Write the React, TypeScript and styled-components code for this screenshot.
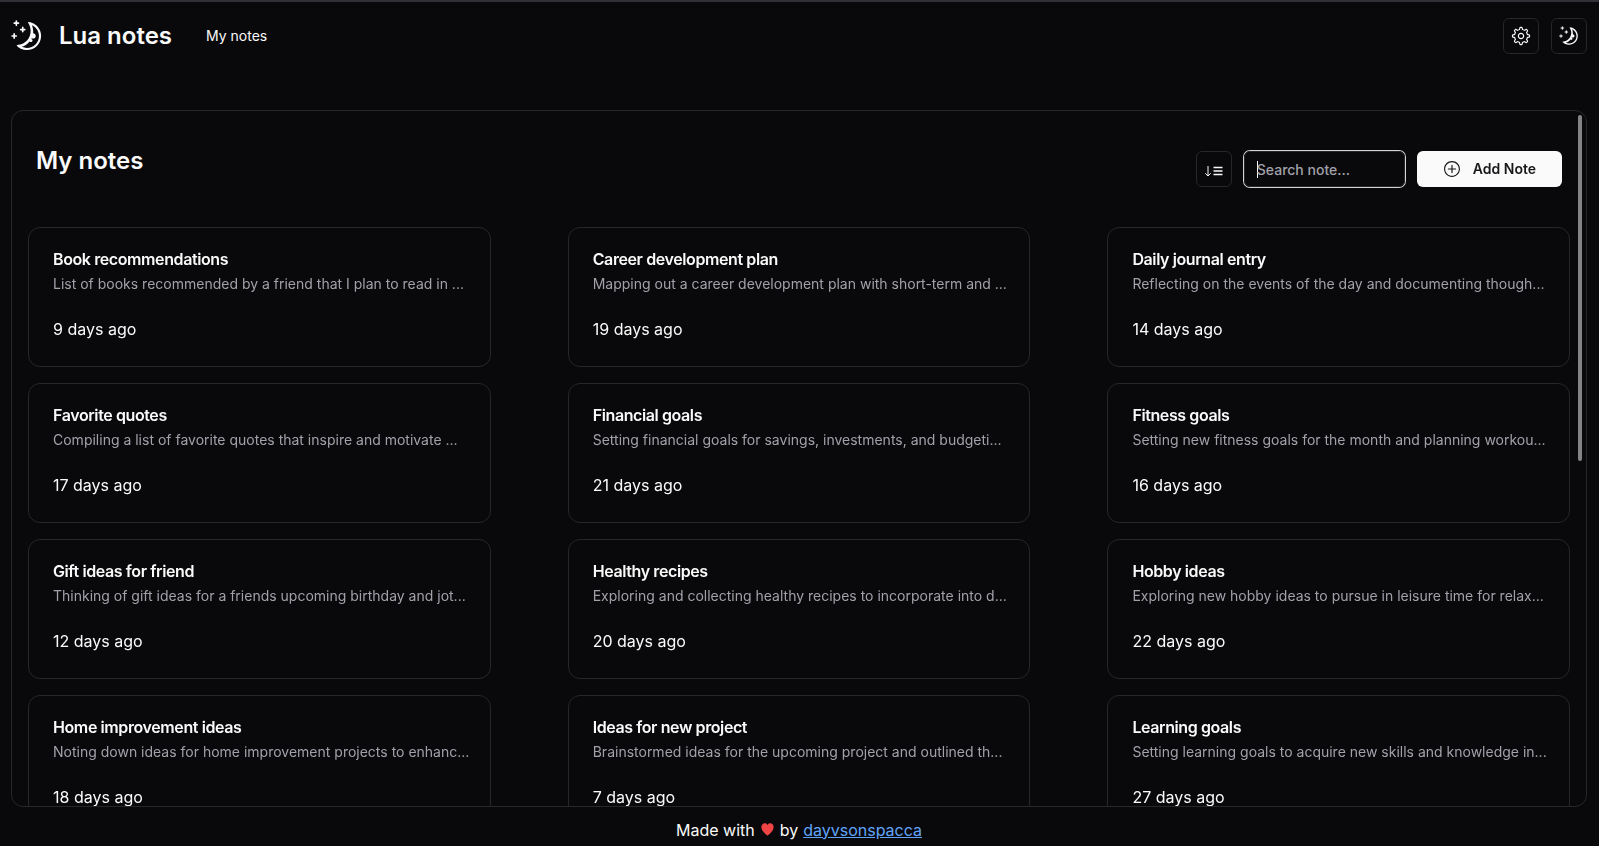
import React from "react";
import styled, { createGlobalStyle, css } from "styled-components";
import { RxGear, RxHeartFilled, RxMoon, RxPlusCircled } from "react-icons/rx";

const GlobalStyle = createGlobalStyle`
  *, *::before, *::after { box-sizing: border-box; }
  body {
    margin: 0;
    background: #09090b;
    color: #fafafa;
    font-family: Inter, "Liberation Sans", sans-serif;
    font-size: 16px;
    line-height: 24px;
  }
  h1, h2, h3, p { margin: 0; }
  button, input { font-family: inherit; }
`;

const Page = styled.div`
  display: flex;
  flex-direction: column;
  height: 100vh;
  border-top: 2px solid #303036;
  padding: 0 12px 0 11px;
`;

const Header = styled.header`
  display: flex;
  align-items: center;
  justify-content: space-between;
  padding: 16px 0;
`;

const Brand = styled.div`
  display: flex;
  align-items: center;
`;

const BrandName = styled.h1`
  margin-left: 16px;
  font-size: 24px;
  line-height: 32px;
  font-weight: 600;
`;

const NavLink = styled.a`
  margin-left: 34px;
  color: inherit;
  font-size: 14px;
  line-height: 20px;
  font-weight: 400;
  text-decoration: none;
`;

const Actions = styled.div`
  display: flex;
  gap: 12px;
`;

const buttonBase = css`
  display: inline-flex;
  align-items: center;
  justify-content: center;
  height: 36px;
  border-radius: 6px;
  padding: 0;
  cursor: pointer;
`;

const IconButton = styled.button`
  ${buttonBase}
  width: 36px;
  border: 1px solid #27272a;
  background: transparent;
  color: #fafafa;
`;

const AddButton = styled.button`
  ${buttonBase}
  gap: 12px;
  padding: 0 26px;
  border: 0;
  background: #fafafa;
  color: #18181b;
  font-size: 14px;
  line-height: 20px;
  font-weight: 600;
`;

const SearchInput = styled.input`
  width: 161px;
  height: 36px;
  padding: 0 12px;
  border: 1px solid #27272a;
  border-radius: 6px;
  outline: none;
  background: transparent;
  color: #fafafa;
  font-size: 14px;
  font-weight: 500;
  box-shadow: 0 0 0 1px #d4d4d8;

  &::placeholder { color: #a1a1aa; opacity: 1; }

  &:focus:placeholder-shown {
    caret-color: transparent;
    background: linear-gradient(#fafafa, #fafafa) 12px center / 1px 17px no-repeat;
  }
`;

const Panel = styled.main`
  position: relative;
  flex: 1;
  min-height: 0;
  margin-top: 40px;
  border: 1px solid #27272a;
  border-radius: 12px;
  overflow: hidden;
`;

const Scroller = styled.div`
  height: 100%;
  overflow-y: auto;
  scrollbar-width: none;
`;

const ScrollThumb = styled.div`
  position: absolute;
  top: 4px;
  right: 4px;
  width: 4px;
  height: calc(50% - 2px);
  border-radius: 2px;
  background: #848485;
`;

const PanelHeader = styled.div`
  display: flex;
  align-items: flex-start;
  justify-content: space-between;
  padding: 40px 24px;
`;

const PanelTitle = styled.h2`
  font-size: 24px;
  line-height: 20px;
  font-weight: 600;
`;

const NoteGrid = styled.div`
  display: grid;
  grid-template-columns: repeat(3, 30%);
  justify-content: space-between;
  row-gap: 16px;
  padding: 0 16px 16px;
`;

const NoteCard = styled.article`
  height: 140px;
  padding: 20px 24px;
  border: 1px solid #27272a;
  border-radius: 12px;
`;

const NoteTitle = styled.h3`
  font-size: 16px;
  line-height: 22px;
  font-weight: 600;
  letter-spacing: -0.025em;
`;

const NoteText = styled.p`
  color: #a1a1aa;
  font-size: 14px;
  line-height: 28px;
  white-space: nowrap;
`;

const NoteDate = styled.p`
  margin-top: 19px;
`;

const Footer = styled.footer`
  display: flex;
  align-items: center;
  justify-content: center;
  gap: 5px;
  height: 39px;
  padding-top: 6px;
`;

const FooterHeart = styled(RxHeartFilled)`
  color: #ef4444;
`;

const AuthorLink = styled.a`
  color: #60a5fa;
  text-decoration: underline;
`;

const notes = [
  ["Book recommendations", "List of books recommended by a friend that I plan to read in ...", "9 days ago"],
  ["Career development plan", "Mapping out a career development plan with short-term and ...", "19 days ago"],
  ["Daily journal entry", "Reflecting on the events of the day and documenting though...", "14 days ago"],
  ["Favorite quotes", "Compiling a list of favorite quotes that inspire and motivate ...", "17 days ago"],
  ["Financial goals", "Setting financial goals for savings, investments, and budgeti...", "21 days ago"],
  ["Fitness goals", "Setting new fitness goals for the month and planning workou...", "16 days ago"],
  ["Gift ideas for friend", "Thinking of gift ideas for a friends upcoming birthday and jot...", "12 days ago"],
  ["Healthy recipes", "Exploring and collecting healthy recipes to incorporate into d...", "20 days ago"],
  ["Hobby ideas", "Exploring new hobby ideas to pursue in leisure time for relax...", "22 days ago"],
  ["Home improvement ideas", "Noting down ideas for home improvement projects to enhanc...", "18 days ago"],
  ["Ideas for new project", "Brainstormed ideas for the upcoming project and outlined th...", "7 days ago"],
  ["Learning goals", "Setting learning goals to acquire new skills and knowledge in...", "27 days ago"],
];

function SortIcon() {
  return (
    <svg width="20" height="20" viewBox="0 0 20 20" fill="none" stroke="currentColor" aria-hidden="true">
      <path d="M4 7v10M1.3 14.3L4 17 6.7 14.3" />
      <path d="M9.5 8.5H18.5M9.5 12H18.5M9.5 15.5H18.5" strokeWidth="1.4" />
    </svg>
  );
}

export default function App() {
  return (
    <>
      <GlobalStyle />
      <Page>
        <Header>
          <Brand>
            <RxMoon size={32} />
            <BrandName>Lua notes</BrandName>
            <NavLink href="#notes">My notes</NavLink>
          </Brand>
          <Actions>
            <IconButton type="button" aria-label="Settings"><RxGear size={20} /></IconButton>
            <IconButton type="button" aria-label="Toggle theme"><RxMoon size={20} /></IconButton>
          </Actions>
        </Header>

        <Panel id="notes">
          <Scroller>
            <PanelHeader>
              <PanelTitle>My notes</PanelTitle>
              <Actions>
                <IconButton type="button" aria-label="Sort notes"><SortIcon /></IconButton>
                <SearchInput type="text" placeholder="Search note..." aria-label="Search note" autoFocus />
                <AddButton type="button"><RxPlusCircled size={18} />Add Note</AddButton>
              </Actions>
            </PanelHeader>
            <NoteGrid>
              {notes.map(([title, text, date]) => (
                <NoteCard key={title}>
                  <NoteTitle>{title}</NoteTitle>
                  <NoteText>{text}</NoteText>
                  <NoteDate>{date}</NoteDate>
                </NoteCard>
              ))}
            </NoteGrid>
          </Scroller>
          <ScrollThumb />
        </Panel>

        <Footer>
          <span>Made with</span>
          <FooterHeart size={15} />
          <span>by</span>
          <AuthorLink href="#dayvsonspacca">dayvsonspacca</AuthorLink>
        </Footer>
      </Page>
    </>
  );
}
